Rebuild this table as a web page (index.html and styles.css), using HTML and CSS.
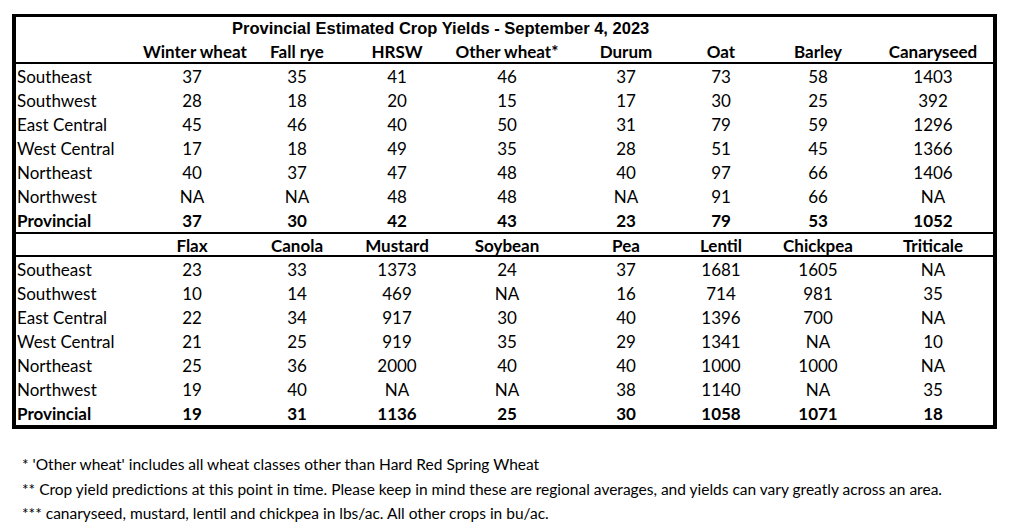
FILE: index.html
```html
<!DOCTYPE html>
<html lang="en">
<head>
<meta charset="utf-8">
<title>Provincial Estimated Crop Yields</title>
<link rel="stylesheet" href="styles.css">
</head>
<body>
<div class="sheet">
  <div class="yields">
    <div class="title">Provincial Estimated Crop Yields - September 4, 2023</div>

    <div class="hd lbl"></div>
    <div class="hd">Winter wheat</div><div class="hd">Fall rye</div><div class="hd">HRSW</div><div class="hd">Other wheat*</div><div class="hd">Durum</div><div class="hd">Oat</div><div class="hd">Barley</div><div class="hd">Canaryseed</div>
    <div class="rule"></div>

    <div class="c lbl">Southeast</div><div class="c">37</div><div class="c">35</div><div class="c">41</div><div class="c">46</div><div class="c">37</div><div class="c">73</div><div class="c">58</div><div class="c">1403</div>
    <div class="c lbl">Southwest</div><div class="c">28</div><div class="c">18</div><div class="c">20</div><div class="c">15</div><div class="c">17</div><div class="c">30</div><div class="c">25</div><div class="c">392</div>
    <div class="c lbl">East Central</div><div class="c">45</div><div class="c">46</div><div class="c">40</div><div class="c">50</div><div class="c">31</div><div class="c">79</div><div class="c">59</div><div class="c">1296</div>
    <div class="c lbl">West Central</div><div class="c">17</div><div class="c">18</div><div class="c">49</div><div class="c">35</div><div class="c">28</div><div class="c">51</div><div class="c">45</div><div class="c">1366</div>
    <div class="c lbl">Northeast</div><div class="c">40</div><div class="c">37</div><div class="c">47</div><div class="c">48</div><div class="c">40</div><div class="c">97</div><div class="c">66</div><div class="c">1406</div>
    <div class="c lbl">Northwest</div><div class="c">NA</div><div class="c">NA</div><div class="c">48</div><div class="c">48</div><div class="c">NA</div><div class="c">91</div><div class="c">66</div><div class="c">NA</div>
    <div class="c lbl tot">Provincial</div><div class="c tot">37</div><div class="c tot">30</div><div class="c tot">42</div><div class="c tot">43</div><div class="c tot">23</div><div class="c tot">79</div><div class="c tot">53</div><div class="c tot">1052</div>
    <div class="rule"></div>

    <div class="hd hd2 lbl"></div>
    <div class="hd hd2">Flax</div><div class="hd hd2">Canola</div><div class="hd hd2">Mustard</div><div class="hd hd2">Soybean</div><div class="hd hd2">Pea</div><div class="hd hd2">Lentil</div><div class="hd hd2">Chickpea</div><div class="hd hd2">Triticale</div>
    <div class="rule"></div>

    <div class="c lbl">Southeast</div><div class="c">23</div><div class="c">33</div><div class="c">1373</div><div class="c">24</div><div class="c">37</div><div class="c">1681</div><div class="c">1605</div><div class="c">NA</div>
    <div class="c lbl">Southwest</div><div class="c">10</div><div class="c">14</div><div class="c">469</div><div class="c">NA</div><div class="c">16</div><div class="c">714</div><div class="c">981</div><div class="c">35</div>
    <div class="c lbl">East Central</div><div class="c">22</div><div class="c">34</div><div class="c">917</div><div class="c">30</div><div class="c">40</div><div class="c">1396</div><div class="c">700</div><div class="c">NA</div>
    <div class="c lbl">West Central</div><div class="c">21</div><div class="c">25</div><div class="c">919</div><div class="c">35</div><div class="c">29</div><div class="c">1341</div><div class="c">NA</div><div class="c">10</div>
    <div class="c lbl">Northeast</div><div class="c">25</div><div class="c">36</div><div class="c">2000</div><div class="c">40</div><div class="c">40</div><div class="c">1000</div><div class="c">1000</div><div class="c">NA</div>
    <div class="c lbl">Northwest</div><div class="c">19</div><div class="c">40</div><div class="c">NA</div><div class="c">NA</div><div class="c">38</div><div class="c">1140</div><div class="c">NA</div><div class="c">35</div>
    <div class="c lbl tot">Provincial</div><div class="c tot">19</div><div class="c tot">31</div><div class="c tot">1136</div><div class="c tot">25</div><div class="c tot">30</div><div class="c tot">1058</div><div class="c tot">1071</div><div class="c tot">18</div>
  </div>

  <div class="notes">
    <p>* 'Other wheat' includes all wheat classes other than Hard Red Spring Wheat</p>
    <p>** Crop yield predictions at this point in time. Please keep in mind these are regional averages, and yields can vary greatly across an area.</p>
    <p>*** canaryseed, mustard, lentil and chickpea in lbs/ac. All other crops in bu/ac.</p>
  </div>
</div>
</body>
</html>
```

FILE: styles.css
```css
html, body {
  margin: 0;
  padding: 0;
  background: #ffffff;
}

body {
  font-family: "Lato", "Liberation Sans", sans-serif;
  color: #000000;
}

.sheet {
  padding: 14px 0 0 12px;
}

.yields {
  width: 977px;
  border: 4px solid #000000;
  border-top-width: 3px;
  display: grid;
  grid-template-columns: 127px 98px 112px 88px 132px 106px 84px 110px 120px;
  font-size: 17px;
}

.title {
  grid-column: 1 / -1;
  height: 23px;
  line-height: 23px;
  padding-left: 216px;
  font-family: "Liberation Sans", Arial, sans-serif;
  font-weight: bold;
  font-size: 16.5px;
  white-space: nowrap;
}

.hd {
  box-sizing: border-box;
  height: 22px;
  padding-top: 2px;
  line-height: 20px;
  font-weight: bold;
  text-align: center;
  white-space: nowrap;
}

.hd.hd2 {
  height: 21px;
  line-height: 19px;
}

.c {
  box-sizing: border-box;
  height: 24px;
  padding-top: 1px;
  line-height: 23px;
  text-align: center;
  white-space: nowrap;
}

.lbl {
  text-align: left;
  padding-left: 1px;
}

.tot {
  font-weight: bold;
}

.rule {
  grid-column: 1 / -1;
  height: 2px;
  background: #000000;
}

.notes {
  padding: 23px 0 0 10px;
  font-size: 15.5px;
}

.notes p {
  margin: 0;
  line-height: 24.5px;
  white-space: nowrap;
}
```
